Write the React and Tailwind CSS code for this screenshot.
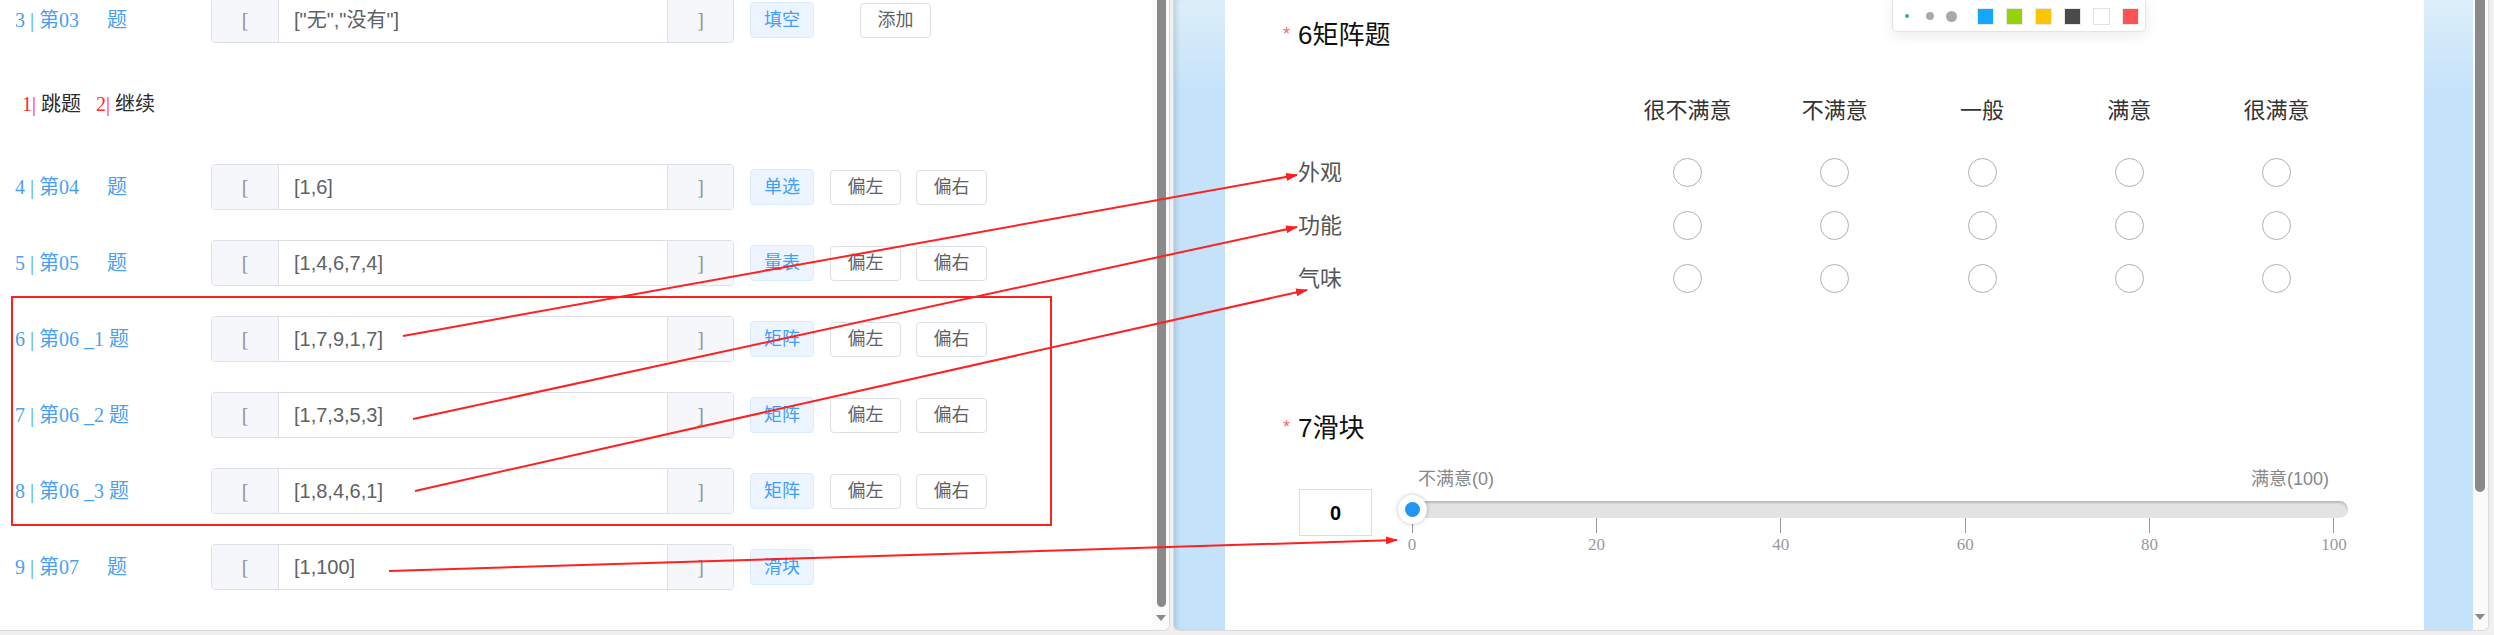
import React from "react";

const SERIF = { fontFamily: '"Liberation Serif", "Noto Sans CJK SC", serif' };

const rows = [
  { n: 4, q: "04", suffix: "", val: "[1,6]", tag: "单选", btns: true },
  { n: 5, q: "05", suffix: "", val: "[1,4,6,7,4]", tag: "量表", btns: true },
  { n: 6, q: "06", suffix: "_1", val: "[1,7,9,1,7]", tag: "矩阵", btns: true },
  { n: 7, q: "06", suffix: "_2", val: "[1,7,3,5,3]", tag: "矩阵", btns: true },
  { n: 8, q: "06", suffix: "_3", val: "[1,8,4,6,1]", tag: "矩阵", btns: true },
  { n: 9, q: "07", suffix: "", val: "[1,100]", tag: "滑块", btns: false },
];

function Label({ n, q, suffix }) {
  return (
    <div
      className="w-[211px] shrink-0 pl-[15px] text-[20px] leading-[24px] text-[#4a9ff5] whitespace-pre"
      style={SERIF}
    >
      {`${n} | 第${q}`}
      {suffix ? ` ${suffix} 题` : <span className="ml-[28px]">题</span>}
    </div>
  );
}

function InputGroup({ val }) {
  return (
    <div className="w-[523px] h-[46px] shrink-0 flex border border-[#dcdfe6] rounded-[4px] overflow-hidden">
      <div
        className="w-[67px] shrink-0 bg-[#f5f7fa] border-r border-[#dcdfe6] flex items-center justify-center text-[20px] text-[#909399]"
        style={SERIF}
      >
        [
      </div>
      <div className="flex-1 bg-white flex items-center pl-[15px] text-[20px] text-[#606266]">{val}</div>
      <div
        className="w-[66px] shrink-0 bg-[#f5f7fa] border-l border-[#dcdfe6] flex items-center justify-center text-[20px] text-[#909399]"
        style={SERIF}
      >
        ]
      </div>
    </div>
  );
}

function Tag({ children }) {
  return (
    <div className="ml-[16px] w-[64px] h-[36px] shrink-0 rounded-[4px] bg-[#ecf5ff] border border-[#d9ecff] text-[#409eff] text-[18px] flex items-center justify-center">
      {children}
    </div>
  );
}

function Btn({ children, className = "" }) {
  return (
    <div
      className={
        "w-[71px] h-[35px] shrink-0 rounded-[4px] bg-white border border-[#dcdfe6] text-[#606266] text-[18px] flex items-center justify-center " +
        className
      }
    >
      {children}
    </div>
  );
}

function Row({ r }) {
  return (
    <div className="h-[46px] flex items-center">
      <Label n={r.n} q={r.q} suffix={r.suffix} />
      <InputGroup val={r.val} />
      <Tag>{r.tag}</Tag>
      {r.btns && (
        <>
          <Btn className="ml-[16px]">偏左</Btn>
          <Btn className="ml-[15px]">偏右</Btn>
        </>
      )}
    </div>
  );
}

function DownArrow() {
  return (
    <div className="w-0 h-0 border-l-[5px] border-r-[5px] border-t-[6px] border-l-transparent border-r-transparent border-t-[#8a8a8a]" />
  );
}

const cols = ["很不满意", "不满意", "一般", "满意", "很满意"];
const mrows = ["外观", "功能", "气味"];
const ticks = [0, 20, 40, 60, 80, 100];

export default function App() {
  return (
    <div
      className="relative w-[2494px] h-[635px] bg-[#f0f0f0] flex items-start overflow-hidden"
      style={{ fontFamily: '"Liberation Sans", "Noto Sans CJK SC", sans-serif' }}
    >
      {/* LEFT PANEL */}
      <div className="w-[1170px] h-[631px] shrink-0 bg-white border-r border-b border-[#d9d9d9] rounded-br-[6px] flex overflow-hidden">
        <div className="w-[1152px] shrink-0 flex flex-col">
          <div className="h-[46px] mt-[-3px] flex items-center">
            <Label n={3} q="03" suffix="" />
            <InputGroup val={'["无","没有"]'} />
            <Tag>填空</Tag>
            <Btn className="ml-[46px]">添加</Btn>
          </div>
          <div className="h-[121px] flex items-center pl-[22px] text-[20px] pt-[1px]">
            <span className="text-[#ff2a2a]" style={SERIF}>1|</span>
            <span className="ml-[5px] text-[#2b2b2b]">跳题</span>
            <span className="ml-[15px] text-[#ff2a2a]" style={SERIF}>2|</span>
            <span className="ml-[5px] text-[#2b2b2b]">继续</span>
          </div>
          <div className="flex flex-col gap-[30px]">
            {rows.map((r) => (
              <Row key={r.n} r={r} />
            ))}
          </div>
        </div>
        <div className="w-[17px] shrink-0 bg-[#fafafa] flex flex-col items-start">
          <div className="ml-[5px] w-[9px] h-[607px] rounded-b-full bg-[#8a8a8a]" />
          <div className="ml-[4px] mt-[8px]">
            <DownArrow />
          </div>
        </div>
      </div>

      {/* RIGHT PANEL */}
      <div className="ml-[3px] w-[1316px] h-[631px] shrink-0 bg-white border-l border-r border-b border-[#d9d9d9] rounded-b-[6px] flex overflow-hidden">
        <div className="w-[51px] shrink-0 bg-linear-to-b from-[#ddeefa] to-[#c4e2f9] to-15% shadow-[inset_5px_0_6px_-4px_rgba(0,0,0,0.18)]" />
        <div className="w-[1199px] shrink-0 bg-white flex flex-col pl-[58px]">
          {/* matrix title */}
          <div className="h-[70px] flex items-center">
            <span className="w-[15px] text-[18px] text-[#f56c6c] leading-none mt-[-2px]">*</span>
            <span className="text-[26px] text-[#111] leading-[36px]">6矩阵题</span>
          </div>
          <div className="mt-[10px] h-[60px] flex items-center pl-[15px]">
            <div className="w-[316px] shrink-0" />
            {cols.map((c) => (
              <div key={c} className="w-[147.25px] shrink-0 text-center text-[22px] text-[#333]">
                {c}
              </div>
            ))}
          </div>
          <div className="mt-[6px] flex flex-col pl-[15px]">
            {mrows.map((m) => (
              <div key={m} className="h-[53px] flex items-center">
                <div className="w-[316px] shrink-0 text-[22px] text-[#555]">{m}</div>
                {cols.map((c) => (
                  <div key={c} className="w-[147.25px] shrink-0 flex justify-center">
                    <div className="w-[29px] h-[29px] rounded-full border border-[#b0b0b0] bg-white" />
                  </div>
                ))}
              </div>
            ))}
          </div>

          {/* slider title */}
          <div className="mt-[98px] h-[50px] flex items-center">
            <span className="w-[15px] text-[18px] text-[#f56c6c] leading-none mt-[-2px]">*</span>
            <span className="text-[26px] text-[#111] leading-[36px]">7滑块</span>
          </div>

          <div className="mt-[14px] flex items-start pl-[16px]">
            <div className="mt-[22px] w-[73px] h-[47px] shrink-0 border border-[#dddddd] flex items-center justify-center text-[20px] font-bold text-black">
              0
            </div>
            <div className="ml-[26px] w-[950px] shrink-0 flex flex-col">
              <div className="h-[24px] flex justify-between items-center pl-[20px] pr-[19px] text-[18px] text-[#888]">
                <span>不满意(0)</span>
                <span>满意(100)</span>
              </div>
              <div className="relative mt-[10px] h-[17px] rounded-full bg-[#e3e3e3] shadow-[inset_0_2px_2px_rgba(0,0,0,0.18)]">
                <div className="absolute left-0 top-[-6px] w-[29px] h-[29px] rounded-full bg-white shadow-[0_0_4px_rgba(0,0,0,0.25)] flex items-center justify-center">
                  <div className="w-[15px] h-[15px] rounded-full bg-[#2196f3]" />
                </div>
              </div>
              <div className="flex justify-between px-[14px]">
                {ticks.map((t) => (
                  <div key={t} className="w-0 flex flex-col items-center">
                    <div className="w-[1px] h-[15px] bg-[#999]" />
                    <div className="mt-[2px] text-[17px] leading-[20px] text-[#9a9a9a]" style={SERIF}>
                      {t}
                    </div>
                  </div>
                ))}
              </div>
            </div>
          </div>
        </div>
        <div className="w-[49px] shrink-0 bg-linear-to-b from-[#ddeefa] to-[#c4e2f9] to-15%" />
        <div className="w-[15px] shrink-0 bg-[#fafafa] flex flex-col items-start">
          <div className="ml-[2px] w-[10px] h-[492px] rounded-b-full bg-[#8a8a8a]" />
          <div className="ml-[2px] mt-[122px]">
            <DownArrow />
          </div>
        </div>
      </div>

      {/* floating toolbar */}
      <div className="absolute left-[1892px] top-[-4px] w-[254px] h-[36px] bg-white border border-[#e4e4e4] rounded-[5px] shadow-[0_4px_14px_rgba(0,0,0,0.08)] flex items-center pl-[12px] pt-[4px]">
        <span className="w-[4px] h-[4px] rounded-full bg-[#19c26b]" />
        <span className="ml-[17px] w-[8px] h-[8px] rounded-full bg-[#a9a9a9]" />
        <span className="ml-[12px] w-[11px] h-[11px] rounded-full bg-[#a9a9a9]" />
        <span className="ml-[20px] w-[17px] h-[17px] bg-[#14a7ff] border border-[#e8e8e8]" />
        <span className="ml-[12px] w-[17px] h-[17px] bg-[#95d20a] border border-[#e8e8e8]" />
        <span className="ml-[12px] w-[17px] h-[17px] bg-[#ffc400] border border-[#e8e8e8]" />
        <span className="ml-[12px] w-[17px] h-[17px] bg-[#4a4a4a] border border-[#e8e8e8]" />
        <span className="ml-[12px] w-[17px] h-[17px] bg-white border border-[#e2e2e2]" />
        <span className="ml-[12px] w-[17px] h-[17px] bg-[#ff5252] border border-[#e8e8e8]" />
      </div>

      {/* annotations */}
      <svg className="absolute inset-0 pointer-events-none" width="2494" height="635" viewBox="0 0 2494 635">
        <defs>
          <marker
            id="ah"
            viewBox="0 0 12 8"
            refX="11"
            refY="4"
            markerWidth="12"
            markerHeight="8"
            markerUnits="userSpaceOnUse"
            orient="auto"
          >
            <path d="M0,0 L12,4 L0,8 z" fill="#ff2020" />
          </marker>
        </defs>
        <rect x="12" y="297" width="1039" height="228" fill="none" stroke="#ff2020" strokeWidth="2" />
        <line x1="403" y1="336" x2="1297" y2="175" stroke="#ff2020" strokeWidth="2" markerEnd="url(#ah)" />
        <line x1="413" y1="419" x2="1297" y2="227" stroke="#ff2020" strokeWidth="2" markerEnd="url(#ah)" />
        <line x1="415" y1="491" x2="1307" y2="290" stroke="#ff2020" strokeWidth="2" markerEnd="url(#ah)" />
        <line x1="389" y1="571" x2="1397" y2="540" stroke="#ff2020" strokeWidth="2" markerEnd="url(#ah)" />
      </svg>
    </div>
  );
}
